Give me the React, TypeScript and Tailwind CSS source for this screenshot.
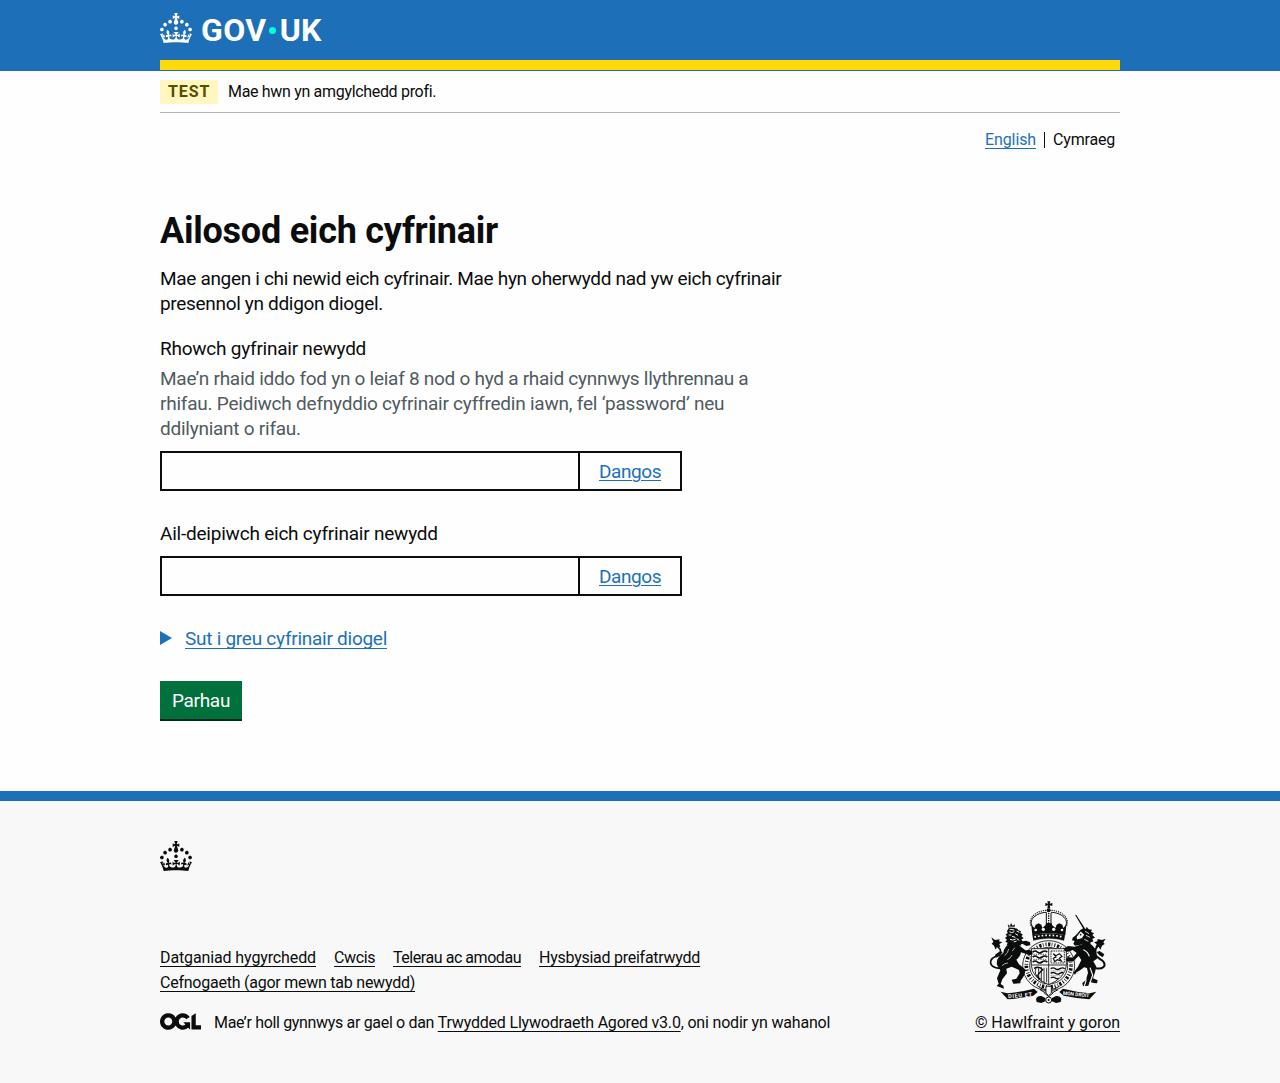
import type { ReactNode } from 'react'

function Crown() {
  return (
    <svg viewBox="0 0 32 30" width="32" height="30" fill="currentColor" fillRule="evenodd" aria-hidden="true" className="block shrink-0">
      <path d="M22.6 10.4c-1 .4-2-.1-2.4-1-.4-.9.1-2 1-2.4.9-.4 2 .1 2.4 1s-.1 2-1 2.4m-5.9 6.7c-.9.4-2-.1-2.4-1-.4-.9.1-2 1-2.4.9-.4 2 .1 2.4 1s-.1 2-1 2.4m10.8-3.7c-1 .4-2-.1-2.4-1-.4-.9.1-2 1-2.4.9-.4 2 .1 2.4 1s0 2-1 2.4m3.3 4.8c-1 .4-2-.1-2.4-1-.4-.9.1-2 1-2.4.9-.4 2 .1 2.4 1s-.1 2-1 2.4M17 4.7l2.3 1.2V2.5l-2.3.7-.2-.2.9-3h-3.4l.9 3-.2.2c-.1.1-2.3-.7-2.3-.7v3.4L15 4.7c.1.1.1.2.2.2l-1.3 4c-.1.2-.1.4-.1.6 0 1.1.8 2 1.9 2.2h.7c1-.2 1.9-1.1 1.9-2.1 0-.2 0-.4-.1-.6l-1.3-4c-.1-.2 0-.2.1-.3m-7.6 5.7c.9.4 2-.1 2.4-1 .4-.9-.1-2-1-2.4-.9-.4-2 .1-2.4 1s0 2 1 2.4m-5 3c.9.4 2-.1 2.4-1 .4-.9-.1-2-1-2.4-.9-.4-2 .1-2.4 1s.1 2 1 2.4m-3.2 4.8c.9.4 2-.1 2.4-1 .4-.9-.1-2-1-2.4-.9-.4-2 .1-2.4 1s0 2 1 2.4m14.8 11c4.4 0 8.6.3 12.3.8 1.1-4.5 2.4-7 3.7-8.8l-2.5-.9c.2 1.3.3 1.9 0 2.7-.4-.4-.8-1.1-1.1-2.3l-1.2 4c.7-.5 1.3-.8 2-.9-1.1 2.5-2.6 3.1-3.5 3-1.1-.2-1.7-1.2-1.5-2.1.3-1.2 1.5-1.5 2.1-.1 1.1-2.3-.8-3-2-2.3 1.9-1.9 2.1-3.5.6-5.6-2.1 1.6-2.1 3.2-1.2 5.5-1.2-1.4-3.2-.6-2.5 1.6.9-1.4 2.1-.5 1.9.8-.2 1.1-1.7 2.1-3.5 1.9-2.7-.2-2.9-2.1-2.9-3.6.7-.1 1.9.5 2.9 1.9l.4-4.3c-1.1 1.1-2.1 1.4-3.2 1.4.4-1.2 2.1-3 2.1-3h-5.4s1.7 1.9 2.1 3c-1.1 0-2.1-.2-3.2-1.4l.4 4.3c1-1.4 2.2-2 2.9-1.9-.1 1.5-.2 3.4-2.9 3.6-1.9.2-3.4-.8-3.5-1.9-.2-1.3 1-2.2 1.9-.8.7-2.3-1.2-3-2.5-1.6.9-2.2.9-3.9-1.2-5.5-1.5 2-1.3 3.7.6 5.6-1.2-.7-3.1 0-2 2.3.6-1.4 1.8-1.1 2.1.1.2.9-.3 1.9-1.5 2.1-.9.2-2.4-.5-3.5-3 .6 0 1.2.3 2 .9l-1.2-4c-.3 1.1-.7 1.9-1.1 2.3-.3-.8-.2-1.4 0-2.7l-2.9.9C1.3 23 2.6 25.5 3.7 30c3.7-.5 7.9-.8 12.3-.8" />
    </svg>
  )
}

function OglLogo() {
  return (
    <svg viewBox="0 0 483.2 195.7" width="41" height="17" fill="currentColor" aria-hidden="true" className="block shrink-0">
      <path d="M421.5 142.8V.1l-50.7 32.3v161.1h112.4v-50.7zm-122.3-9.6A47.12 47.12 0 0 1 221 97.8c0-26 21.1-47.1 47.1-47.1 16.7 0 31.4 8.7 39.7 21.8l42.7-27.2A97.63 97.63 0 0 0 268.1 0c-36.5 0-68.3 20.1-85.1 49.7A98 98 0 0 0 97.8 0C43.9 0 0 43.9 0 97.8s43.9 97.8 97.8 97.8c36.5 0 68.3-20.1 85.1-49.7a97.76 97.76 0 0 0 149.6 25.4l19.4 22.2h3v-87.8h-80l24.3 27.5zM97.8 145c-26 0-47.1-21.1-47.1-47.1s21.1-47.1 47.1-47.1 47.1 21.1 47.1 47.1S123.8 145 97.8 145" />
    </svg>
  )
}

function RoyalArms() {
  return (
    <svg viewBox="57 27 351 309" width="117" height="103" fill="#0b0c0c" stroke="none" aria-hidden="true" className="block overflow-visible">
      {/* crown */}
      <path d="M232 31h9l-2 7 8-2v9l-8-2 2 9h-9l2-9-8 2v-9l8 2z" />
      <circle cx="236" cy="58" r="6" />
      <g fill="none" stroke="#0b0c0c">
        <path d="M190 110C170 88 200 64 230 64M283 110C303 88 273 64 243 64" strokeWidth="3" />
        <path d="M183 104C172 78 205 58 229 58M290 104C301 78 268 58 244 58" strokeWidth="3.5" strokeDasharray="3.5 3" />
        <path d="M229 66v34M243 66v34" strokeWidth="3" />
        <path d="M236 66v34" strokeWidth="4" strokeDasharray="4 3" />
      </g>
      <path d="M184 103l9 8 4-10 9-4 8 4 3 10 9-8 3-7h15l3 7 9 8 4-10 8-4 9 4 3 10 9-8-3 30q-50-12-99 0z" />
      <g fill="#f8f8f8">
        <circle cx="197" cy="117" r="4" />
        <circle cx="220" cy="115" r="5" />
        <circle cx="251" cy="115" r="5" />
        <circle cx="276" cy="117" r="4" />
      </g>
      <path d="M187 133q49-12 98 0l-3 16q-46-11-92 0z" />
      <path d="M193 138q43-10 86 0" fill="none" stroke="#f8f8f8" strokeWidth="5" strokeDasharray="5 6" />
      <path d="M192 149q44-11 88 0" fill="none" stroke="#f8f8f8" strokeWidth="1.5" />

      {/* garter */}
      <ellipse cx="236" cy="224" rx="78" ry="75" fill="#f8f8f8" stroke="#0b0c0c" strokeWidth="2.5" />
      <ellipse cx="236" cy="224" rx="67" ry="64" fill="none" stroke="#0b0c0c" strokeWidth="11" strokeDasharray="3 5 7 4 2 6" />
      <ellipse cx="236" cy="224" rx="57" ry="55" fill="#f8f8f8" stroke="#0b0c0c" strokeWidth="2.5" />

      {/* shield */}
      <path d="M184 173h105v50q-3 38-53 58-50-20-52-58z" fill="#f8f8f8" stroke="#0b0c0c" strokeWidth="2.5" />
      <path d="M236 173v108M184 222h105" stroke="#0b0c0c" strokeWidth="2.5" />
      <g fill="none" stroke="#0b0c0c">
        <path d="M188 183q8-6 14 0t14 0 16 0M188 198q8-6 14 0t14 0 16 0M188 213q8-6 14 0t14 0 16 0" strokeWidth="5" />
        <path d="M190 190h42M190 205h42" strokeWidth="2" strokeDasharray="4 3" />
        <path d="M243 180h40v36h-40z" strokeWidth="2.5" strokeDasharray="5 2" />
        <path d="M250 188l8 6 10-6 8 8-8 6 6 8-12-4-8 6-4-10 8-4z" strokeWidth="3.5" />
        <path d="M198 230q-8 20 12 36M206 228v40M214 228v44M222 230v44M230 230v44" strokeWidth="2.5" />
        <path d="M192 232q16-8 26 4l-12 12q-8 10 6 16" strokeWidth="4" />
        <path d="M242 233q8-5 14 0t14 0 14 0M242 247q8-5 14 0t14 0 10 0M242 261q8-5 14 0t10 0" strokeWidth="4" />
        <path d="M242 240h42M242 254h36" strokeWidth="1.5" strokeDasharray="3 3" />
      </g>

      {/* lion */}
      <path d="M116 112l-3-12 7 5 3-9 5 8 7-4-2 11 9 2 3 5 8 3-2 5 8 5-5 4 7 7-7 3 5 8-8 2 3 9-8-1 0 9-8-4-4 8-7-7-8 3-1-9-8 0 3-8-7-3 5-6-6-5 6-5-4-6 6-3-2-7z" />
      <path d="M116 108l18 1M118 122l7 3 8-3M116 132h8M126 136l10 3M120 145l8 2 9-3M136 128l8 5M131 153l9-3M119 115l14 2M140 143l8 5M140 120l8 4M144 154l6 3" fill="none" stroke="#f8f8f8" strokeWidth="3" />
      <path d="M118 158c-12 8-18 18-18 28-14 8-22 22-19 36l10 16-10 24 5 16-6 7 22 8-2-9-8-5 5-14 14-18-2-14 16-6 22 10 2 10-10 16-14 3 5 12 21-1 1-8 10-15 5-18-20-16-8-14c8-6 13-14 14-22l26 9 9-3-1-9-9-4-12 1-19-15 10-5 12 7 12-2-1-9-12-5-18 3z" />
      <path d="M104 194q10-8 12-20M112 206q10-4 14-14M96 224q8-8 18-8M126 180q6-4 8-10" fill="none" stroke="#f8f8f8" strokeWidth="2" />
      <path d="M92 232C70 232 58 222 63 208c5-13 28-12 29-27 1-10-12-12-18-24" fill="none" stroke="#0b0c0c" strokeWidth="5" />
      <path d="M64 139l11 8 14-2-2 6 10 3-9 5 3 9-10-1-4 9-5-12-7-6 5-5z" />
      <path d="M75 191l15-10 8 3-8 10-12 6z" />

      {/* unicorn */}
      <path d="M315 71l4 1 27 42-4 3z" />
      <path d="M332 116l8-4 8 2 2-7 6 8 10 1-3 6 9 5-5 5 8 8-8 3 3 9-8 1-1 10-9-3-7 10-6-12-10 4-14 2-5-6 4-8-8-2 2-8 10-8z" />
      <path d="M345 121l12 7M348 133l12 6M343 145l12 6" fill="none" stroke="#f8f8f8" strokeWidth="2.5" />
      <path d="M332 120l-14 18 2 9 16-4 8-12z" fill="#f8f8f8" stroke="#0b0c0c" strokeWidth="3" />
      <circle cx="332" cy="131" r="2.5" />
      <path d="M336 160l-22 7-20-2-12 7 1 8 12 2 13-5 12 9-12 14-14-2-7 7 6 7 17-1 16-16 8 12-10 20-14 18 6 8 11-11 15-13 9 2 3 15-7 22-10 8 2 10 16-2 4-12 12 4 10 1 2-9-14-6 6-18 4-17-9-16 11-8-2-26-14-16-18-8z" />
      <path d="M344 232l-24 14-8 14M360 230l8 22-8 24M340 176q14 6 18 20M346 250l2 20-6 18" fill="none" stroke="#f8f8f8" strokeWidth="3.5" />
      <path d="M378 232c22 4 30-8 23-19-7-10-26-13-27-28 0-10 7-18 14-24" fill="none" stroke="#0b0c0c" strokeWidth="6" />
      <path d="M407 143l-11 4-13-3-1 7-10 3 8 6-4 8 10-1 5 9 5-12 8-5-4-5zM403 190l-14-10-9 3 8 10 10 6z" />

      {/* mottoes and plinth */}
      <path d="M92 302l20 5q40-4 80-14l11 10-13 11q-40 8-77 11zM379 302l-20 5q-40-4-80-14l-11 10 13 11q40 8 77 11z" />
      <g fill="#f8f8f8" fontFamily="Roboto, sans-serif" fontWeight="700" fontSize="17">
        <text x="115" y="322" textLength="72" transform="rotate(-5 115 322)">DIEU ET</text>
        <text x="278" y="311" textLength="80" fontSize="15" transform="rotate(6 278 311)">MON DROIT</text>
      </g>
      <path d="M203 285q10 10 33 12 22-2 33-12M210 296q12 12 26 6 14 6 28-6M222 305l14 12 14-12" fill="none" stroke="#0b0c0c" strokeWidth="3" />
      <path d="M228 286h16v20l-8 8-8-8z" fill="#f8f8f8" stroke="#0b0c0c" strokeWidth="2.5" />
      <path d="M198 324q3-10 16-9l12 6 0 10-12 5-14-3zM274 324q-3-10-16-9l-12 6 0 10 12 5 14-3z" />
      <circle cx="236" cy="327" r="9" fill="#f8f8f8" stroke="#0b0c0c" strokeWidth="3" />
      <circle cx="236" cy="327" r="3" />
    </svg>
  )
}

function Container({ children, className = '' }: { children: ReactNode; className?: string }) {
  return <div className={`mx-auto w-[960px] ${className}`}>{children}</div>
}

function PasswordInput({ id }: { id: string }) {
  return (
    <div className="flex h-10 w-[522px] border-2 border-[#0b0c0c]">
      <input id={id} type="password" className="w-[416px] px-1 outline-none" />
      <button type="button" className="flex-1 border-l-2 border-[#0b0c0c] pt-px text-center tracking-[-0.43px] text-[#1d70b8] underline decoration-1 underline-offset-2">
        Dangos
      </button>
    </div>
  )
}

function FooterLink({ children, className }: { children: ReactNode; className: string }) {
  return (
    <a href="#" className={`inline-block underline decoration-1 underline-offset-[3px] [text-decoration-skip-ink:none] ${className}`}>
      {children}
    </a>
  )
}

export default function App() {
  return (
    <div className="flex min-h-[1083px] flex-col bg-[#fefefe] font-['Roboto',sans-serif] text-[19px] leading-[25px] whitespace-nowrap text-[#0b0c0c]">
      <header className="h-[71px] bg-[#1d70b8] text-white">
        <Container className="flex h-[70px] items-start border-b-10 border-[#ffd90a] pt-[13px]">
          <Crown />
          <div className="ml-[9px] flex h-[34px] items-center text-[32px] leading-[34px] font-bold">
            <span className="tracking-[0.4px]">GOV</span>
            <span className="mt-px mr-[4px] ml-[2px] size-[7px] rounded-full bg-[#00ffe0]" />
            <span className="tracking-[0.2px]">UK</span>
          </div>
        </Container>
      </header>

      <Container className="flex-1">
        <div className="flex h-[42px] items-start border-b border-[#b1b4b6] pt-[9px] text-base leading-6">
          <strong className="h-6 w-[58px] bg-[#fff7bf] pl-2 tracking-[0.9px] text-[#594d00]">TEST</strong>
          <span className="ml-[10px] tracking-[-0.32px]">Mae hwn yn amgylchedd profi.</span>
        </div>

        <nav className="mt-[17px] flex h-5 items-center justify-end pr-[5px] text-base leading-5">
          <a href="#" className="tracking-[-0.11px] text-[#1d70b8] underline decoration-1 underline-offset-[3px] [text-decoration-skip-ink:none]">
            English
          </a>
          <span className="ml-2 h-4 border-l border-[#0b0c0c]" />
          <span className="ml-2 tracking-[-0.19px]">Cymraeg</span>
        </nav>

        <main className="pt-[61px]">
          <h1 className="mb-[15px] text-4xl leading-10 font-bold tracking-[-0.24px]">Ailosod eich cyfrinair</h1>
          <p className="mb-5 tracking-[-0.32px]">
            Mae angen i chi newid eich cyfrinair. Mae hyn oherwydd nad yw eich cyfrinair
            <br />
            presennol yn ddigon diogel.
          </p>

          <label htmlFor="new-password" className="mb-[5px] block tracking-[-0.24px]">
            Rhowch gyfrinair newydd
          </label>
          <div className="mb-[10px] text-[#505a5f]">
            <span className="block tracking-[-0.27px]">Mae’n rhaid iddo fod yn o leiaf 8 nod o hyd a rhaid cynnwys llythrennau a</span>
            <span className="block tracking-[-0.23px]">rhifau. Peidiwch defnyddio cyfrinair cyffredin iawn, fel ‘password’ neu</span>
            <span className="block tracking-[-0.25px]">ddilyniant o rifau.</span>
          </div>
          <PasswordInput id="new-password" />

          <label htmlFor="confirm-password" className="mt-[30px] mb-[10px] block tracking-[-0.22px]">
            Ail-deipiwch eich cyfrinair newydd
          </label>
          <PasswordInput id="confirm-password" />

          <div className="mt-[30px] flex items-start text-[#1d70b8]">
            <span className="mt-[5px] border-y-[7px] border-l-[12px] border-y-transparent border-l-[#1d70b8]" />
            <a href="#" className="ml-[13px] tracking-[-0.26px] underline decoration-1 underline-offset-[3px] [text-decoration-skip-ink:none]">
              Sut i greu cyfrinair diogel
            </a>
          </div>

          <button type="button" className="mt-[30px] block h-[38px] w-[82px] bg-[#00703c] pt-px text-center tracking-[-0.3px] text-white shadow-[0_2px_0_#002d18]">
            Parhau
          </button>
        </main>
      </Container>

      <footer className="h-[292px] border-t-10 border-[#1d70b8] bg-[#f8f8f8] text-base leading-5">
        <Container className="pt-10">
          <Crown />
          <div className="mt-[29px] flex items-end justify-between">
            <div>
              <div className="flex gap-[18px]">
                <FooterLink className="tracking-[-0.12px]">Datganiad hygyrchedd</FooterLink>
                <FooterLink className="tracking-[-0.39px]">Cwcis</FooterLink>
                <FooterLink className="tracking-[-0.45px]">Telerau ac amodau</FooterLink>
                <FooterLink className="tracking-[-0.26px]">Hysbysiad preifatrwydd</FooterLink>
              </div>
              <div className="mt-[5px]">
                <FooterLink className="tracking-[-0.24px]">Cefnogaeth (agor mewn tab newydd)</FooterLink>
              </div>
              <div className="mt-5 flex items-start">
                <OglLogo />
                <span className="ml-[13px] tracking-[-0.33px]">
                  Mae’r holl gynnwys ar gael o dan{' '}
                  <FooterLink className="tracking-[-0.2px]">Trwydded Llywodraeth Agored v3.0</FooterLink>
                  <span className="tracking-[-0.19px]">, oni nodir yn wahanol</span>
                </span>
              </div>
            </div>
            <div className="flex w-[145px] flex-col items-center">
              <RoyalArms />
              <FooterLink className="mt-[10px] tracking-[-0.09px]">© Hawlfraint y goron</FooterLink>
            </div>
          </div>
        </Container>
      </footer>
    </div>
  )
}
